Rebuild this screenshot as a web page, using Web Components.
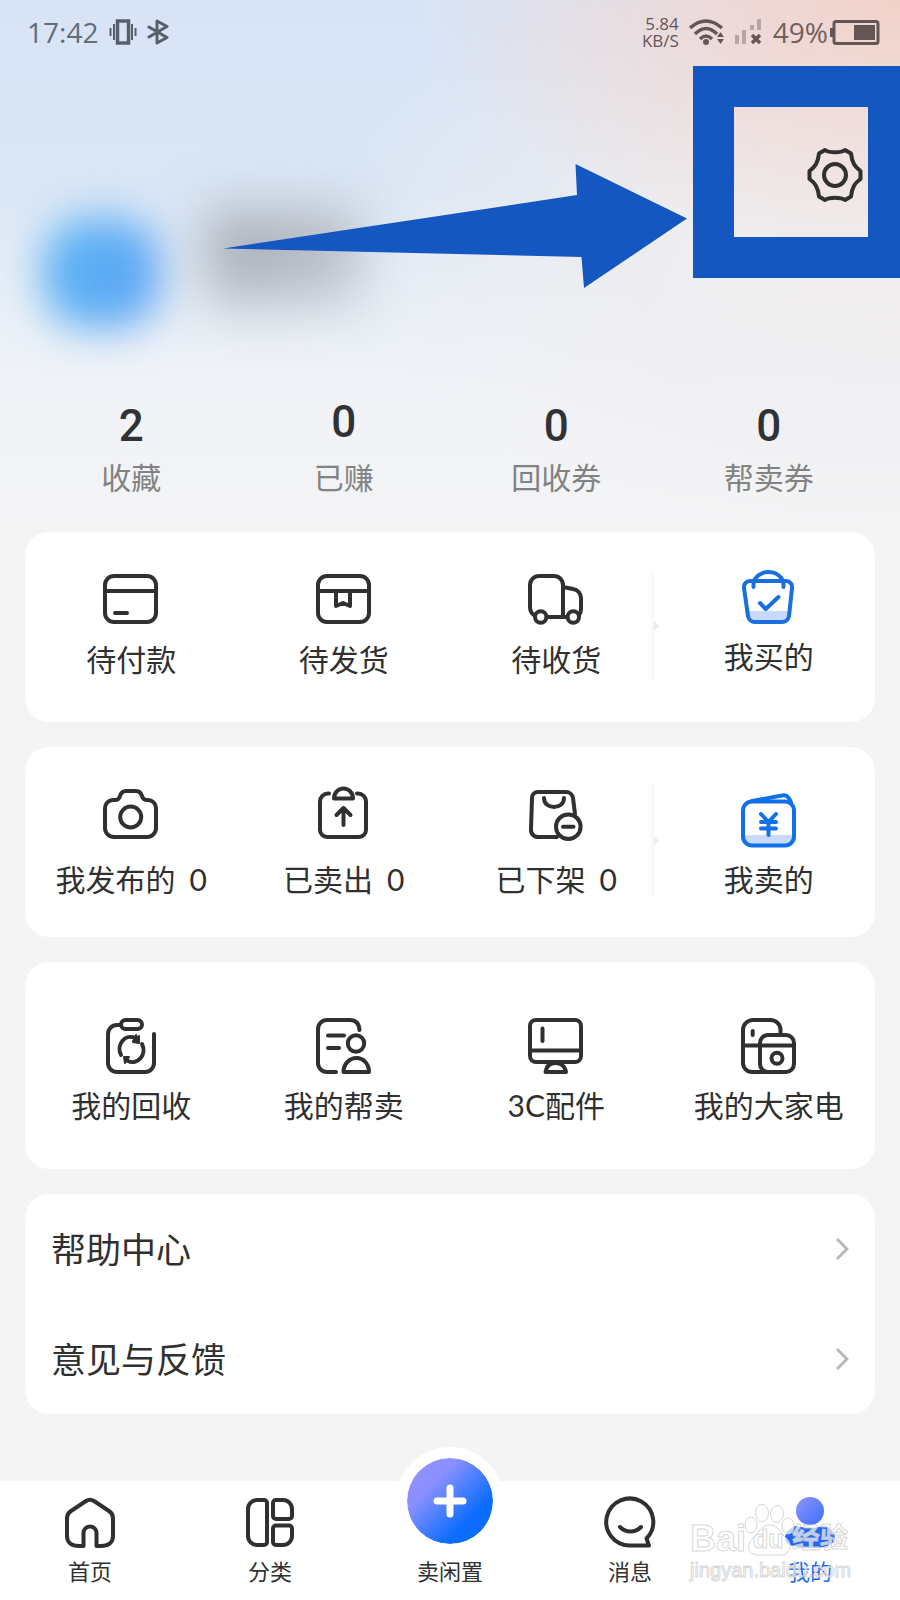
<!DOCTYPE html>
<html lang="zh-CN">
<head>
<meta charset="utf-8">
<meta name="viewport" content="width=device-width, initial-scale=1">
<title>我的</title>
<style>
  body {
    margin: 0;
    background: #f4f4f4;
    color: #303030;
    font-family: Lato, "Noto Sans CJK SC", sans-serif;
  }
</style>
</head>
<body>
<profile-page>
  <status-bar slot="top"></status-bar>
  <profile-header slot="top"></profile-header>
  <stat-row slot="top">
    <stat-item value="2">收藏</stat-item>
    <stat-item value="0" loose>已赚</stat-item>
    <stat-item value="0">回收券</stat-item>
    <stat-item value="0">帮卖券</stat-item>
  </stat-row>
  <tile-card kind="orders" divided>
    <tile-link icon="card">待付款</tile-link>
    <tile-link icon="box">待发货</tile-link>
    <tile-link icon="truck">待收货</tile-link>
    <tile-link icon="bag" tight>我买的</tile-link>
  </tile-card>
  <tile-card kind="sales" divided>
    <tile-link icon="camera" count="0">我发布的</tile-link>
    <tile-link icon="sold" count="0">已卖出</tile-link>
    <tile-link icon="off" count="0">已下架</tile-link>
    <tile-link icon="wallet">我卖的</tile-link>
  </tile-card>
  <tile-card kind="services">
    <tile-link icon="recycle">我的回收</tile-link>
    <tile-link icon="assist">我的帮卖</tile-link>
    <tile-link icon="monitor">3C配件</tile-link>
    <tile-link icon="fridge">我的大家电</tile-link>
  </tile-card>
  <menu-card>
    <menu-row>帮助中心</menu-row>
    <menu-row>意见与反馈</menu-row>
  </menu-card>
  <tab-bar slot="bottom">
    <tab-item icon="home">首页</tab-item>
    <tab-item icon="grid">分类</tab-item>
    <tab-item icon="plus" main>卖闲置</tab-item>
    <tab-item icon="chat">消息</tab-item>
    <tab-item icon="me" active>我的</tab-item>
  </tab-bar>
</profile-page>

<script>
const ICONS = {
  card: '<rect x="4" y="7" width="51" height="46" rx="9"/><path d="M4 22H55M14 44H26"/>',
  box: '<rect x="4" y="7" width="51" height="46" rx="9"/><path d="M4 22H55M22 22V37l7-3 7 3V22"/>',
  truck: '<path d="M8 46C5 44 4 42 4 38V16a9 9 0 0 1 9-9H28a9 9 0 0 1 9 9V48M21 48H41M37 18l10 2a9 9 0 0 1 8 9V40c0 3-1 5-2 6"/><circle cx="14.7" cy="48" r="5.7"/><circle cx="47.3" cy="48" r="5.7"/>',
  bag: '<path d="M6 42H52L50 53H9z" fill="#c9d9fb" stroke="none"/><path stroke="#1a6fe0" d="M11 12H47a6 6 0 0 1 6 7L50 47a7 7 0 0 1-7 6H16a7 7 0 0 1-7-6L5 19a6 6 0 0 1 6-7zM14.500 18V16a15 13 0 0 1 30 0V18M21 34l5.700 6L39.500 28"/>',
  camera: '<path d="M4 24a8 8 0 0 1 8-8h2c3 0 4-1 5-4s3-5 6-5h10c3 0 5 2 6 5s2 4 5 4h1a8 8 0 0 1 8 8V44a9 9 0 0 1-9 9H13a9 9 0 0 1-9-9z"/><circle cx="29.700" cy="33" r="10.500"/>',
  sold: '<path d="M15 9.500h-1a8 8 0 0 0-8 8V46a7 7 0 0 0 7 7H45a7 7 0 0 0 7-7V17.500a8 8 0 0 0-8-8h-1M20 14.500a9.500 10 0 0 1 19 0zM29.500 24V41M22.500 31l7-7 7 7"/>',
  off: '<path d="M12 8H40a7 7 0 0 1 7 6l2 16M12 8a6 6 0 0 0-6 6L5 45a7 7 0 0 0 7 8H31M18 14c0 12 20 12 20 0M37 42.700H47.500"/><circle cx="42.300" cy="42.700" r="12.300"/>',
  wallet: '<path d="M4 51H55V54a7 7 0 0 1-7 7H11a7 7 0 0 1-7-7z" fill="#c9d9f8" stroke="none"/><g stroke="#1270e8"><rect x="4" y="17.500" width="51" height="44" rx="9"/><path d="M13 17L43 11.500c4-1 7 1 9 7M22 30l7.500 8L37 30M29.500 38V51M22 38H37M22 44.500H37"/></g>',
  recycle: '<rect x="20" y="5" width="21" height="9" rx="4.500"/><path d="M19 10H16a9 9 0 0 0-9 9V48a9 9 0 0 0 9 9H44a9 9 0 0 0 9-9V19M20 40a11 12 0 0 1 14-17M41 29a11 12 0 0 1-14 17"/><path fill="#303030" stroke-width="2" d="M35 20l3 8-6-1zM38 21v6l-6-1zM23 42h5l-4 6z"/>',
  assist: '<path d="M22 57H13a9 9 0 0 1-9-9V14a9 9 0 0 1 9-9H36c6 0 9 4 9.500 10M14 20.500H30M14 33H25M29.500 57c0-8 6-14 13-14s12.500 6 12.500 14z"/><circle cx="42" cy="28.500" r="8.200"/>',
  monitor: '<rect x="4" y="5" width="51" height="42" rx="6"/><path d="M4 35.500H55M16.500 13.500V26M19.500 57c1-6 5-9 10-9s9.500 3 10.500 9z"/>',
  fridge: '<path d="M41.500 19V15a10 10 0 0 0-10-10H14a10 10 0 0 0-10 10V48a9 9 0 0 0 9 9H27M4 30.500H55M13.700 16V20"/><rect x="21" y="20" width="34" height="37" rx="8"/><circle cx="38" cy="43.300" r="5.500"/>',
  home: '<path d="M23.500 54V41a6.500 6.500 0 0 1 13 0V54H41c7 0 12-3 12-10V26c0-3-1-5-4-7L34 9c-3-2-5-2-8 0L11 19c-3 2-4 4-4 7V44c0 7 5 10 12 10z"/>',
  grid: '<path d="M17 8H24a3 3 0 0 1 3 3V50a3 3 0 0 1-3 3H17a9 9 0 0 1-9-9V17a9 9 0 0 1 9-9zM36 8H43a9 9 0 0 1 9 9v7a3 3 0 0 1-3 3H36a3 3 0 0 1-3-3V11a3 3 0 0 1 3-3zM36 33.500H49a3 3 0 0 1 3 3V44a9 9 0 0 1-9 9H36a3 3 0 0 1-3-3V36.500a3 3 0 0 1 3-3z"/>',
  chat: '<path d="M30 53.500H49L46.500 46.500A23.500 23.500 0 1 0 30 53.500zM20 35c6 6 15 6 21 0"/>',
  plus: '<path stroke="#fff" stroke-width="7" d="M30 17V43M17 30H43"/>',
  me: '<defs><linearGradient id="g" x1="0" y1="0" x2="1" y2="1"><stop offset="0" stop-color="#9193fb"/><stop offset="1" stop-color="#3a70fb"/></linearGradient></defs><circle cx="30" cy="19" r="14" fill="url(#g)" stroke="none"/><path fill="#2466f5" stroke="none" d="M15 34c4 0 7 2 15 2s11-2 15-2c5 2 10 7 10 12 0 7-10 10-25 10S5 53 5 46c0-5 5-10 10-12z"/>',
  gear: '<path d="M20 5C24 8 36 8 40 5L46 8.500C47 18 50 22 55.500 26V34C50 38 47 42 46 51.500L40 55C36 52 24 52 20 55L14 51.500C13 42 10 38 4.500 34V26C10 22 13 18 14 8.500z"/><circle cx="30" cy="30" r="11"/>'
};

class BaseElement extends HTMLElement {
  connectedCallback() {
    if (this.shadowRoot) return;
    this.attachShadow({ mode: 'open' }).innerHTML =
      `<style>*{box-sizing:border-box}:host{display:block}a{color:inherit;text-decoration:none}${this.css()}</style>${this.html()}`;
  }
  css() { return ''; }
  html() { return '<slot></slot>'; }
}

customElements.define('line-icon', class extends BaseElement {
  css() { return ':host{width:60px;height:60px;flex:none}svg{display:block;overflow:visible}'; }
  html() {
    return `<svg width="60" height="60" viewBox="0 0 60 60" fill="none" stroke="#303030" stroke-width="4" stroke-linecap="round" stroke-linejoin="round" aria-hidden="true">${ICONS[this.getAttribute('name')]}</svg>`;
  }
});

customElements.define('profile-page', class extends BaseElement {
  css() { return `
    :host{display:flex;flex-direction:column;min-height:100vh;position:relative;
      background:
        radial-gradient(ellipse 480px 250px at 100% 0,rgba(244,208,197,.9) 0,rgba(243,211,203,.65) 40%,rgba(240,225,230,0) 100%) no-repeat,
        radial-gradient(ellipse 560px 300px at 100% 230px,#f0eded 0,rgba(240,237,238,.85) 40%,rgba(240,238,242,0) 100%) no-repeat,
        linear-gradient(to bottom,#d8e4f6 0,#dbe7f6 190px,#e8eff7 300px,#f1f3f8 400px,#f4f4f4 560px)}
    main{flex:1;display:flex;flex-direction:column;gap:25px;padding:37px 25px 66px}`; }
  html() { return '<slot name="top"></slot><main><slot></slot></main><slot name="bottom"></slot>'; }
});

customElements.define('status-bar', class extends BaseElement {
  css() { return `
    :host{display:flex;align-items:center;height:64px;padding:0 20px 0 27px;font:400 28px/32px "Open Sans",sans-serif;color:#626d78}
    svg{display:block;flex:none;color:#55606a}
    .vib{margin-left:11px}.bt{margin-left:10px}
    .right{margin-left:auto;display:flex;align-items:center;color:#6f6060}
    .right svg{color:#655656}
    .speed{display:grid;justify-items:end;font:400 17px/17px "Open Sans",sans-serif;color:#655656}
    .wifi{margin:0 10px}.sig{margin-right:10px}`; }
  html() { return `
    <span>17:42</span>
    <svg class="vib" width="28" height="28" viewBox="0 0 28 28" fill="none" stroke="currentColor"><rect x="8.500" y="3" width="11" height="22" stroke-width="3.500"/><path stroke-width="2" d="M5 6V22M1.500 10V18M23 6V22M26.500 10V18"/></svg>
    <svg class="bt" width="22" height="28" viewBox="0 0 22 28" fill="none" stroke="currentColor" stroke-width="3" stroke-linejoin="round" stroke-linecap="round"><path d="M2 9L20 19.500 10 25V3L20 8.500 2 19"/></svg>
    <div class="right">
      <div class="speed"><span>5.84</span><span>KB/S</span></div>
      <svg class="wifi" width="36" height="28" viewBox="0 0 36 28" fill="none" stroke="currentColor" stroke-width="3.500"><path d="M1 10Q17 -4 33 10M6 16Q17 5 28 16M11 21Q17 15 23 21"/><circle cx="17" cy="24" r="3" fill="currentColor" stroke="none"/><path d="M28 19l3.500-5 3.500 5zM28 21l3.500 5 3.500-5z" fill="currentColor" stroke="none"/></svg>
      <svg class="sig" width="28" height="28" viewBox="0 0 28 28"><path fill="#b9a5a5" d="M0 17h4v9H0zM7 12h4v14H7zM15 7h4v5h-4zM22 1h4v11h-4z"/><path d="M17 17l8 8M25 17l-8 8" stroke="currentColor" stroke-width="3.500"/></svg>
      <span>49%</span>
      <svg width="52" height="28" viewBox="0 0 52 28"><path fill="currentColor" d="M2 10h4v9H2z"/><rect x="6" y="3.500" width="44" height="22" rx="2" fill="none" stroke="currentColor" stroke-width="3"/><path fill="currentColor" d="M26 7h21v15H26z"/></svg>
    </div>`; }
});

customElements.define('profile-header', class extends BaseElement {
  css() { return `
    :host{display:flex;align-items:flex-start;position:relative;height:330px;padding-top:2px}
    .avatar{width:118px;height:110px;margin:152px 0 0 43px;border-radius:45px;background:linear-gradient(110deg,#58b4f3,#5fa3f5);filter:blur(21px)}
    .name{width:156px;height:96px;margin:144px 0 0 44px;background:linear-gradient(150deg,#9fa6b0,#c9ced6);filter:blur(26px)}
    .arrow{position:absolute;right:213px;top:100px}
    .frame{display:flex;justify-content:flex-end;align-items:flex-start;margin-left:auto;width:207px;height:212px;padding:38px 3px 0 0;border:solid #1457c0;border-width:41px 32px 41px 41px}
    button{padding:0;border:0;background:none}`; }
  html() { return `
    <div class="avatar"></div><div class="name"></div>
    <svg class="arrow" width="464" height="124" viewBox="0 0 464 124" aria-hidden="true"><path fill="#1457c0" d="M0 84.500L354 31 352.500 0 464 54.500 361 124 358.500 93z"/></svg>
    <div class="frame"><button aria-label="设置"><line-icon name="gear"></line-icon></button></div>`; }
});

customElements.define('stat-row', class extends BaseElement {
  css() { return ':host{display:grid;grid-template-columns:repeat(4,1fr);align-items:end;padding:0 25px}'; }
});

customElements.define('stat-item', class extends BaseElement {
  css() { return `
    a{display:flex;flex-direction:column;align-items:center;gap:7px;font-size:30px;line-height:36px;color:#828282}
    :host([loose]) a{gap:11px}
    b{font:500 44px/52px Roboto,sans-serif;color:#303235}`; }
  html() { return `<a href="#"><b>${this.getAttribute('value')}</b><span><slot></slot></span></a>`; }
});

customElements.define('tile-card', class extends BaseElement {
  css() { return `
    :host{display:grid;grid-template-columns:repeat(4,1fr);position:relative;border-radius:24px;background:#fff}
    :host([kind=orders]){padding:37px 0 45px;--gap:12px}
    :host([kind=sales]){padding:37px 0 40px;--gap:17px}
    :host([kind=services]){padding:53px 0 46px;--gap:12px}
    i{display:none}
    :host([divided]) i{display:block;position:absolute;left:calc(75% - 14px);top:38px;width:5px;height:110px;background:linear-gradient(to right,#fff,#f6f6f6)}
    i::after{content:"";position:absolute;left:5px;top:51px;border:solid transparent;border-width:5px 0 5px 5px;border-left-color:#ececec}`; }
  html() { return '<slot></slot><i></i>'; }
});

customElements.define('tile-link', class extends BaseElement {
  css() { return `
    a{display:flex;flex-direction:column;align-items:center;gap:var(--gap);font-size:30px;line-height:36px;white-space:nowrap}
    :host([tight]) a{gap:9px}
    .n{margin-left:14px}`; }
  html() {
    const n = this.getAttribute('count');
    return `<a href="#"><line-icon name="${this.getAttribute('icon')}"></line-icon><span><slot></slot>${n ? `<span class="n">${n}</span>` : ''}</span></a>`;
  }
});

customElements.define('menu-card', class extends BaseElement {
  css() { return ':host{border-radius:24px;background:#fff}'; }
});

customElements.define('menu-row', class extends BaseElement {
  css() { return 'a{display:flex;align-items:center;justify-content:space-between;height:110px;padding:0 26px;font-size:35px;line-height:42px}'; }
  html() { return '<a href="#"><span><slot></slot></span><svg width="14" height="24" viewBox="0 0 14 24" fill="none" stroke="#b8b8b8" stroke-width="3" aria-hidden="true"><path d="M2 2l10 10L2 22"/></svg></a>'; }
});

customElements.define('tab-bar', class extends BaseElement {
  css() { return `
    :host{position:relative;background:#fff}
    nav{display:grid;grid-template-columns:repeat(5,1fr);padding:11px 0 14px}
    .mark{position:absolute;right:47px;bottom:18px;width:163px;white-space:nowrap;color:rgba(255,255,255,.7);-webkit-text-stroke:1px rgba(205,205,205,.8);pointer-events:none}
    .brand{display:flex;align-items:flex-end;font:700 36px/38px "Liberation Sans","Noto Sans CJK SC",sans-serif}
    .paw{position:relative;width:46px;height:54px;flex:none}
    .paw svg{display:block}
    .paw span{position:absolute;left:7px;bottom:5px;font-size:25px;line-height:28px}
    .cn{font-size:28px}
    .url{font:20px/24px "Liberation Sans",sans-serif}`; }
  html() { return `<nav><slot></slot></nav>
    <div class="mark"><div class="brand"><span>Bai</span><span class="paw"><svg width="46" height="54" viewBox="0 0 46 54" overflow="visible" fill="#fff" fill-opacity=".7" stroke="#d6d6d6"><ellipse cx="5" cy="21" rx="6" ry="8"/><ellipse cx="16" cy="9" rx="6.500" ry="8.500"/><ellipse cx="31" cy="10" rx="6.500" ry="8.500"/><ellipse cx="42" cy="22" rx="6" ry="8"/><path d="M24 21c9 0 11 9 17 14 6 6 3 16-6 16H12c-10 0-12-10-6-16 6-5 9-14 18-14z"/></svg><span>du</span></span><span class="cn">经验</span></div>
    <div class="url">jingyan.baidu.com</div></div>`; }
});

customElements.define('tab-item', class extends BaseElement {
  css() { return `
    a{display:flex;flex-direction:column;align-items:center;font-size:22px;line-height:28px}
    .pic{margin-bottom:6px}
    :host([main]) .pic{display:flex;align-items:center;justify-content:center;width:108px;height:108px;margin:-45px 0 3px;border:11px solid #fff;border-radius:50%;background:linear-gradient(135deg,#9490ff 10%,#8a90ff 30%,#0b6dff 72%) padding-box}
    :host([active]){color:#1a6fe8}`; }
  html() { return `<a href="#"><span class="pic"><line-icon name="${this.getAttribute('icon')}"></line-icon></span><span><slot></slot></span></a>`; }
});
</script>
</body>
</html>
